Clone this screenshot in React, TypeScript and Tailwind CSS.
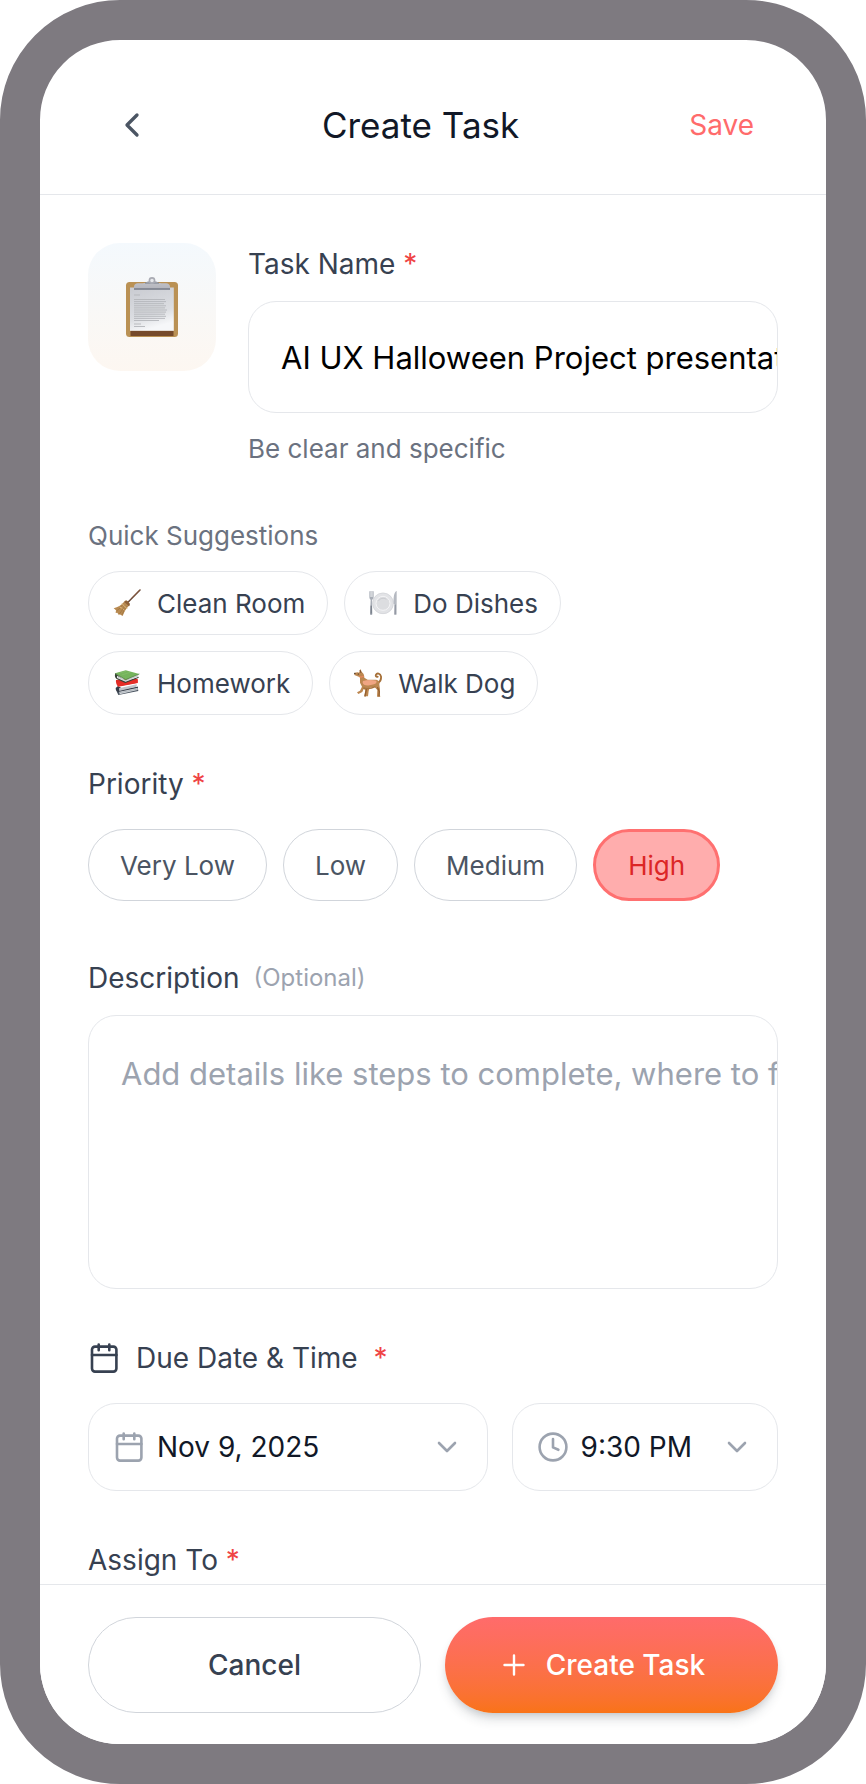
import React, { useState } from "react";

type IconProps = { className?: string };

const stroke = {
  fill: "none",
  stroke: "currentColor",
  strokeLinecap: "round" as const,
  strokeLinejoin: "round" as const,
};

function BackIcon() {
  return (
    <svg viewBox="0 0 24 24" className="size-10" strokeWidth="2" aria-hidden="true" {...stroke}>
      <path d="M15 18l-6-6 6-6" />
    </svg>
  );
}

function PlusIcon() {
  return (
    <svg viewBox="0 0 32 32" className="size-8 shrink-0" strokeWidth="2.4" aria-hidden="true" {...stroke}>
      <path d="M16 6.5v19M6.5 16h19" />
    </svg>
  );
}

function CalendarIcon({ className = "" }: IconProps) {
  return (
    <svg viewBox="0 0 32 32" className={`size-8 shrink-0 ${className}`} strokeWidth="2.6" aria-hidden="true" {...stroke}>
      <rect x="4" y="4.6" width="24.4" height="25" rx="3" />
      <path d="M10.7 2.6v5.6M21.3 2.6v5.6M4 13h24.4" />
    </svg>
  );
}

function ClockIcon({ className = "" }: IconProps) {
  return (
    <svg viewBox="0 0 32 32" className={`size-8 shrink-0 ${className}`} strokeWidth="2.6" aria-hidden="true" {...stroke}>
      <circle cx="16" cy="16" r="13.4" />
      <path d="M16 8v8.4l5.4 2.4" />
    </svg>
  );
}

function ChevronDownIcon({ className = "" }: IconProps) {
  return (
    <svg viewBox="0 0 32 32" className={`size-8 shrink-0 ${className}`} strokeWidth="2.6" aria-hidden="true" {...stroke}>
      <path d="M8 12l8 8 8-8" />
    </svg>
  );
}

function ClipboardArt() {
  return (
    <svg viewBox="0 0 64 64" className="size-16" aria-hidden="true">
      <defs>
        <linearGradient id="paper" x1="0" y1="0" x2="0.3" y2="1">
          <stop offset="0" stopColor="#c9cbd1" />
          <stop offset="0.7" stopColor="#dcdee2" />
          <stop offset="1" stopColor="#f6f7f9" />
        </linearGradient>
        <linearGradient id="clip" x1="0" y1="0" x2="0" y2="1">
          <stop offset="0" stopColor="#c3c4ca" />
          <stop offset="1" stopColor="#b2b3ba" />
        </linearGradient>
      </defs>
      <rect x="6" y="7" width="52" height="55" rx="3.5" fill="#ba9154" />
      <rect x="10.5" y="55.5" width="43" height="5.6" rx="0.6" fill="#764a2b" />
      <rect x="10" y="12.5" width="43.8" height="43.3" fill="url(#paper)" />
      <path d="M14 14.5v-2.8C14 9.6 15.600 8.300 18 8.300h4.500c3 0 3.600-1 5.500-2.300h8c1.900 1.300 2.500 2.300 5.500 2.300H46c2.400 0 4 1.300 4 3.400v2.800z" fill="url(#clip)" />
      <path d="M14 13.200h36v1.500H14z" fill="#777d89" />
      <path d="M25 8h14" stroke="#707685" strokeWidth="0.9" />
      <circle cx="32" cy="5.500" r="2.600" fill="#e8e9ec" stroke="#a9abb3" strokeWidth="1.600" />
      <g stroke="#b3b5ba" strokeWidth="0.9">
        <path d="M14 20h6M14 24.500h31M14 26.600h32M14 28.700h30M14 30.800h32M14 32.900h31M14 35h33M14 37.100h32M14 39.200h31M14 41.300h32M14 43.400h31M14 45.500h25M14 49h7M14 51.500h11" />
      </g>
    </svg>
  );
}

function BroomArt() {
  return (
    <svg viewBox="0 0 84 84" className="size-7 shrink-0" aria-hidden="true">
      <path d="M81 3L42 43" stroke="#6b4a3a" strokeWidth="4.500" strokeLinecap="round" />
      <path d="M80 3L58 25" stroke="#96613d" strokeWidth="2" strokeLinecap="round" />
      <path d="M32 40c3-5 7-7 11-4l5 5c3 4 2 8-3 12-6 6-11 15-16 28L20 76l-2 3-5-8-5 1 1-8-7-6c13-3 23-9 30-18z" fill="#b88a51" />
      <path d="M34 39l14 13c3-4 3-8 0-11l-5-5c-3-2-6-1-9 3z" fill="#8d6037" />
      <path d="M30 44c-5 9-10 15-18 21M36 48c-5 10-9 17-17 27M41 52c-6 8-10 16-13 25" stroke="#9a6f3c" strokeWidth="2" fill="none" />
      <path d="M27 44l16 16" stroke="#e2bd80" strokeWidth="3" />
      <path d="M20 54l8 4M30 60l5 4" stroke="#e2bd80" strokeWidth="2.500" />
    </svg>
  );
}

function DishArt() {
  return (
    <svg viewBox="0 0 84 84" className="size-7 shrink-0" aria-hidden="true">
      <circle cx="42" cy="43" r="32" fill="#e2e3e6" />
      <circle cx="42" cy="43" r="31" fill="none" stroke="#d2d3d8" strokeWidth="2" />
      <circle cx="42" cy="43" r="21" fill="#dcdde0" stroke="#f4f4f6" strokeWidth="3" />
      <path d="M28 36c5-8 16-11 24-5" fill="none" stroke="#bfc1c6" strokeWidth="2" />
      <path d="M1 7v16c0 6 3 8 4 9l-2 43c0 4 7 4 7 0L9 32c2-1 5-3 5-9V7" fill="#a8adb6" />
      <path d="M4 7v17M7.500 7v17M11 7v17" stroke="#fff" strokeWidth="1.500" />
      <path d="M6.500 50v24" stroke="#676e7a" strokeWidth="3" />
      <path d="M82 6c-7 5-9 19-8 39h2l-1 30c0 4 8 4 8 0V6z" fill="#b5b9c1" />
      <path d="M79 47v28" stroke="#858b96" strokeWidth="2.500" />
    </svg>
  );
}

function BooksArt() {
  return (
    <svg viewBox="0 0 84 84" className="size-7 shrink-0" aria-hidden="true">
      <path d="M8 61l8 17 60-12-2-13-30 8z" fill="#47515d" />
      <path d="M18 67l56-12v8L20 76z" fill="#d2d6da" />
      <path d="M20 71l54-11" stroke="#8f969e" strokeWidth="1.500" />
      <path d="M15 51l-7 6c0 5 3 9 7 12l60-13v-3L30 60z" fill="#343b47" />
      <path d="M18 58l53-12v7L19 66z" fill="#c1c4c9" />
      <path d="M9 33c-1 7 1 15 7 20l58-11V29L30 31z" fill="#df2c26" />
      <path d="M13 38l16 3 45-9v9l-58 11c-3-4-4-9-3-14z" fill="#e62d27" />
      <path d="M7 13c-3 7-1 14 4 17l26 12 40-16v-3L37 36z" fill="#364236" />
      <path d="M12 20l25 13 39-16v6L38 38 12 27z" fill="#e9eaec" />
      <path d="M14 24l24 11 37-15" fill="none" stroke="#a3a6a9" strokeWidth="1.500" />
      <path d="M6 13L38 4l41 11-41 18z" fill="#75b45c" />
      <path d="M16 13l23-6M26 18l25-8" stroke="#86c06d" strokeWidth="2" />
      <path d="M6 13l32 19 41-17" fill="none" stroke="#4b743f" strokeWidth="2" />
    </svg>
  );
}

function DogArt() {
  return (
    <svg viewBox="0 0 84 84" className="size-7 shrink-0" aria-hidden="true">
      <path d="M72 42c7-4 10-12 9-20-2-9-12-11-15-5-2 4 1 8 5 6" fill="none" stroke="#a67038" strokeWidth="5.500" strokeLinecap="round" />
      <path d="M15 11l4-11 5 10c5 4 7 9 7 16l10 6 26 0c8 2 11 8 9 15l2 13-1 15 2 8h-10l1-20-9-10-14 3-3 10-2 16h-11l3-19-5-3-4 9-12 6-4-5 9-5 6-12-6-12V25L1 18l1-7 9-1z" fill="#bd8750" />
      <path d="M28 57c12 3 24 2 36-4" fill="none" stroke="#a97440" strokeWidth="4" />
      <path d="M37 62l-4 19M71 56l5 12-1 13" fill="none" stroke="#94602f" strokeWidth="4" strokeLinecap="round" />
      <path d="M27 36c12-4 28-4 40-1 2 5-1 9-7 11-12 4-23 4-30 1-4-3-5-7-3-11z" fill="#f0a582" />
      <path d="M18 3l3 9" stroke="#7f5331" strokeWidth="3" />
      <circle cx="13" cy="15" r="1.800" fill="#33251c" />
      <circle cx="2.500" cy="13.500" r="2" fill="#35271f" />
      <path d="M16 23c5 2 9 1 13-2" fill="none" stroke="#e8875d" strokeWidth="4" />
    </svg>
  );
}

const suggestions = [
  { label: "Clean Room", Art: BroomArt },
  { label: "Do Dishes", Art: DishArt },
  { label: "Homework", Art: BooksArt },
  { label: "Walk Dog", Art: DogArt },
];

const priorities = ["Very Low", "Low", "Medium", "High"];

const labelText = "text-[28px] leading-[42px] text-[#374151]";

function Required() {
  return <span className="text-[#ef4444]">*</span>;
}

export default function App() {
  const [name, setName] = useState("AI UX Halloween Project presentation");
  const [priority, setPriority] = useState("High");

  return (
    <div className="flex min-h-screen flex-col overflow-hidden rounded-[120px] border-[40px] border-[#7e7a80] bg-white font-['Inter',sans-serif]">
      <header className="flex items-center justify-between border-b border-[#e5e7eb] px-12 pt-[41px] pb-[25px]">
        <button type="button" aria-label="Back" className="p-6 text-[#4b5563]">
          <BackIcon />
        </button>
        <h1 className="text-[35px] leading-[54px] text-[#111827]">Create Task</h1>
        <button type="button" className="px-6 text-[28px] leading-[42px] text-[#ff6b6b]">
          Save
        </button>
      </header>

      <main className="flex grow flex-col px-12 pt-12">
        <section className="flex gap-8">
          <div className="flex size-32 shrink-0 items-center justify-center rounded-[32px] bg-linear-to-b from-[#f4f9fd] to-[#fdf7f1]">
            <ClipboardArt />
          </div>
          <div className="flex min-w-0 grow flex-col">
            <label htmlFor="task-name" className={labelText}>
              Task Name <Required />
            </label>
            <input
              id="task-name"
              type="text"
              value={name}
              onChange={(e) => setName(e.target.value)}
              aria-describedby="task-hint"
              className="mt-4 h-28 w-full rounded-[28px] border border-[#e5e7eb] bg-white pl-8 text-[31px] text-black outline-none"
            />
            <p id="task-hint" className="mt-4 text-[26px] leading-[39px] text-[#6b7280]">
              Be clear and specific
            </p>
          </div>
        </section>

        <section className="mt-12">
          <h2 className="text-[26px] leading-[39px] text-[#6b7280]">Quick Suggestions</h2>
          <div className="mt-4 flex max-w-[560px] flex-wrap gap-4">
            {suggestions.map(({ label, Art }) => (
              <button
                key={label}
                type="button"
                onClick={() => setName(label)}
                className="flex h-16 items-center gap-4 rounded-full border border-[#e5e7eb] pr-[22px] pl-6 text-[26px] leading-[39px] text-[#374151]"
              >
                <Art />
                {label}
              </button>
            ))}
          </div>
        </section>

        <section className="mt-12">
          <h2 className={labelText}>
            Priority <Required />
          </h2>
          <div className="mt-6 flex flex-wrap gap-4">
            {priorities.map((item) => (
              <button
                key={item}
                type="button"
                aria-pressed={item === priority}
                onClick={() => setPriority(item)}
                className={
                  item === priority
                    ? "h-18 rounded-full border-3 border-[#ff7070] bg-[#ffadad] px-8 text-[26px] leading-[39px] text-[#dc2626]"
                    : "h-18 rounded-full border border-[#d1d5db] px-[31px] text-[26px] leading-[39px] text-[#4b5563]"
                }
              >
                {item}
              </button>
            ))}
          </div>
        </section>

        <section className="mt-14 flex flex-col">
          <label htmlFor="description" className={`flex items-center gap-[14px] ${labelText}`}>
            Description
            <span className="text-[24px] text-[#9ca3af]">(Optional)</span>
          </label>
          <textarea
            id="description"
            wrap="off"
            placeholder="Add details like steps to complete, where to find supplies"
            className="mt-4 h-[274px] w-full resize-none overflow-hidden rounded-[28px] border border-[#e5e7eb] bg-white py-8 pl-8 text-[31px] leading-[52px] whitespace-nowrap outline-none placeholder:text-[#9ca3af]"
          />
        </section>

        <section className="mt-12">
          <h2 className={`flex items-center gap-4 ${labelText}`}>
            <CalendarIcon />
            Due Date &amp; Time
            <Required />
          </h2>
          <div className="mt-6 grid grid-cols-[3fr_2fr] gap-6">
            <div className="flex h-22 items-center gap-3 rounded-[28px] border border-[#e5e7eb] px-6">
              <CalendarIcon className="text-[#9ca3af]" />
              <select
                aria-label="Due date"
                className="min-w-0 grow appearance-none bg-transparent text-[28px] leading-[42px] text-[#111827] outline-none"
              >
                <option>Nov 9, 2025</option>
              </select>
              <ChevronDownIcon className="text-[#9ca3af]" />
            </div>
            <div className="flex h-22 items-center gap-3 rounded-[28px] border border-[#e5e7eb] px-6">
              <ClockIcon className="text-[#9ca3af]" />
              <select
                aria-label="Due time"
                className="min-w-0 grow appearance-none bg-transparent text-[28px] leading-[42px] text-[#111827] outline-none"
              >
                <option>9:30 PM</option>
              </select>
              <ChevronDownIcon className="text-[#9ca3af]" />
            </div>
          </div>
        </section>

        <section className="mt-12">
          <h2 className={labelText}>
            Assign To <Required />
          </h2>
        </section>
      </main>

      <footer className="grid grid-cols-2 gap-6 border-t border-[#e5e7eb] bg-white px-12 pt-8 pb-[31px]">
        <button
          type="button"
          className="h-24 rounded-full border border-[#d1d5db] text-[28px] leading-[42px] font-medium text-[#374151]"
        >
          Cancel
        </button>
        <button
          type="button"
          className="flex h-24 items-center justify-center gap-4 rounded-full bg-linear-to-b from-[#ff6b6b] to-[#f97316] pr-5 text-[28px] leading-[42px] font-medium text-white shadow-[0_8px_12px_-2px_rgba(31,41,55,0.16),0_4px_8px_-4px_rgba(31,41,55,0.2)]"
        >
          <PlusIcon />
          Create Task
        </button>
      </footer>
    </div>
  );
}
